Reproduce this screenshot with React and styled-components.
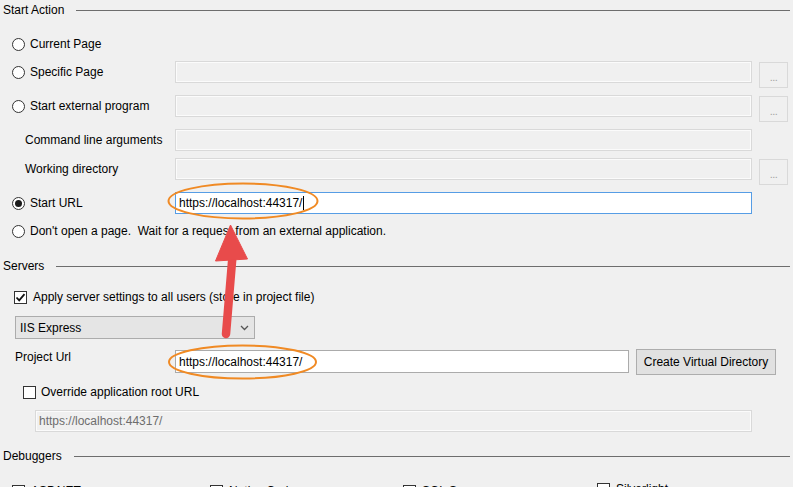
import React from "react";
import styled, { createGlobalStyle } from "styled-components";

const GlobalStyle = createGlobalStyle`
  html, body {
    margin: 0;
    padding: 0;
    background: #f0f0f0;
  }
  * {
    box-sizing: border-box;
  }
`;

const Page = styled.div`
  position: relative;
  width: 793px;
  height: 487px;
  overflow: hidden;
  padding-right: 3px;
  background: #f0f0f0;
  font-family: "Liberation Sans", Arial, sans-serif;
  font-size: 12px;
  color: #000;
`;

const Header = styled.div`
  display: flex;
  align-items: center;
  height: 20px;
  padding-left: 3px;
  margin-top: ${(p) => p.$mt || 0}px;
`;

const HeaderLine = styled.div`
  flex: 1;
  height: 1px;
  margin-left: 12px;
  background: #6d6d6d;
`;

const Row = styled.div`
  display: grid;
  grid-template-columns: ${(p) => p.$cols || "168px 577px 29px"};
  column-gap: 7px;
  align-items: start;
  height: ${(p) => p.$h}px;
  margin-top: ${(p) => p.$mt}px;
`;

const Label = styled.div`
  display: flex;
  align-items: center;
  height: ${(p) => p.$h || 22}px;
  padding-left: ${(p) => p.$pl || 0}px;
  grid-column: ${(p) => (p.$wide ? "1 / -1" : "auto")};
  white-space: pre;
`;

const Radio = styled.span`
  display: inline-flex;
  align-items: center;
  justify-content: center;
  width: 13px;
  height: 13px;
  margin-right: 5px;
  border: 1px solid #333;
  border-radius: 50%;
  background: #fff;
  &::after {
    content: "";
    display: ${(p) => (p.$checked ? "block" : "none")};
    width: 7px;
    height: 7px;
    border-radius: 50%;
    background: #1a1a1a;
  }
`;

const Box = styled.span`
  display: inline-flex;
  align-items: center;
  justify-content: center;
  width: 13px;
  height: 13px;
  margin-right: ${(p) => p.$mr || 5}px;
  border: 1px solid #333;
  background: #fff;
  svg {
    display: block;
  }
`;

const Field = styled.div`
  display: flex;
  align-items: center;
  height: ${(p) => p.$h || 22}px;
  margin-top: ${(p) => p.$mt || 0}px;
  padding-left: 3px;
  border: 1px solid ${(p) => (p.$active ? "#569de5" : p.$white ? "#ababab" : "#d9d9d9")};
  background: ${(p) => (p.$active || p.$white ? "#fff" : "#f0f0f0")};
  box-shadow: ${(p) => (p.$active || p.$white ? "none" : "inset 0 0 0 1px #fbfbfb")};
  color: ${(p) => (p.$muted ? "#6d6d6d" : "#000")};
  width: ${(p) => (p.$w ? `${p.$w}px` : "auto")};
  margin-left: ${(p) => p.$ml || 0}px;
`;

const Caret = styled.span`
  display: inline-block;
  width: 1px;
  height: 14px;
  margin-left: 1px;
  background: #000;
`;

const BrowseButton = styled.div`
  display: flex;
  align-items: center;
  justify-content: center;
  height: 26px;
  margin-top: 1px;
  padding-top: 4px;
  border: 1px solid #d9d9d9;
  background: #f0f0f0;
  color: #a3a3a3;
  font-size: 11px;
  letter-spacing: -0.5px;
`;

const Select = styled.div`
  display: flex;
  align-items: center;
  justify-content: space-between;
  width: 240px;
  height: 23px;
  margin-top: ${(p) => p.$mt}px;
  margin-left: 15px;
  padding: 0 5px 0 4px;
  border: 1px solid #acacac;
  background: #e5e5e5;
`;

const Button = styled.div`
  display: flex;
  align-items: center;
  justify-content: center;
  height: 26px;
  border: 1px solid #adadad;
  background: #e1e1e1;
`;

const CheckRow = styled.div`
  display: flex;
  align-items: center;
  height: 16px;
  margin-top: ${(p) => p.$mt}px;
  padding-left: ${(p) => p.$pl}px;
`;

const DebugRow = styled.div`
  display: grid;
  grid-template-columns: 198px 193px 194px 1fr;
  height: 16px;
  margin-top: ${(p) => p.$mt}px;
  padding-left: 12px;
`;

const DebugItem = styled.div`
  display: flex;
  align-items: center;
  height: 16px;
  margin-top: ${(p) => p.$up || 0}px;
`;

const Overlay = styled.svg`
  position: absolute;
  left: 0;
  top: 0;
  width: 793px;
  height: 487px;
  pointer-events: none;
`;

const Check = () => (
  <svg width="11" height="11" viewBox="0 0 11 11">
    <path d="M1.5 5.5 L4.2 8.3 L9.5 2.2" fill="none" stroke="#111" strokeWidth="1.8" />
  </svg>
);

const Chevron = () => (
  <svg width="9" height="6" viewBox="0 0 9 6">
    <path d="M1 1 L4.5 4.5 L8 1" fill="none" stroke="#555" strokeWidth="1.3" />
  </svg>
);

const URL = "https://localhost:44317/";

export default function App() {
  return (
    <>
      <GlobalStyle />
      <Page>
        <Header>
          Start Action
          <HeaderLine />
        </Header>

        <Row $mt={16} $h={16}>
          <Label $h={16} $pl={12} $wide>
            <Radio />
            Current Page
          </Label>
        </Row>
        <Row $mt={9} $h={27}>
          <Label $pl={12}>
            <Radio />
            Specific Page
          </Label>
          <Field />
          <BrowseButton>...</BrowseButton>
        </Row>
        <Row $mt={7} $h={26}>
          <Label $pl={12}>
            <Radio />
            Start external program
          </Label>
          <Field />
          <BrowseButton>...</BrowseButton>
        </Row>
        <Row $mt={8} $h={22}>
          <Label $pl={25}>Command line arguments</Label>
          <Field />
        </Row>
        <Row $mt={7} $h={26}>
          <Label $pl={25}>Working directory</Label>
          <Field />
          <BrowseButton>...</BrowseButton>
        </Row>
        <Row $mt={8} $h={22}>
          <Label $pl={12}>
            <Radio $checked />
            Start URL
          </Label>
          <Field $active>
            {URL}
            <Caret />
          </Field>
        </Row>
        <Row $mt={9} $h={16}>
          <Label $h={16} $pl={12} $wide>
            <Radio />
            {"Don't open a page.  Wait for a request from an external application."}
          </Label>
        </Row>

        <Header $mt={17}>
          Servers
          <HeaderLine />
        </Header>
        <CheckRow $mt={13} $pl={14}>
          <Box $mr={6}>
            <Check />
          </Box>
          Apply server settings to all users (store in project file)
        </CheckRow>
        <Select $mt={11}>
          IIS Express
          <Chevron />
        </Select>
        <Row $mt={10} $h={26} $cols="168px 454px 140px">
          <Label $h={16} $pl={15}>Project Url</Label>
          <Field $white $h={23} $mt={1}>
            {URL}
          </Field>
          <Button>Create Virtual Directory</Button>
        </Row>
        <CheckRow $mt={9} $pl={23}>
          <Box />
          Override application root URL
        </CheckRow>
        <Field $mt={10} $ml={35} $w={717} $muted>
          {URL}
        </Field>

        <Header $mt={14}>
          Debuggers
          <HeaderLine />
        </Header>
        <DebugRow $mt={17}>
          <DebugItem>
            <Box $mr={6} />
            ASP.NET
          </DebugItem>
          <DebugItem>
            <Box $mr={6} />
            Native Code
          </DebugItem>
          <DebugItem>
            <Box $mr={6} />
            SQL Server
          </DebugItem>
          <DebugItem $up={-2}>
            <Box $mr={6} />
            Silverlight
          </DebugItem>
        </DebugRow>

        <Overlay viewBox="0 0 793 487">
          <ellipse cx="243" cy="201" rx="74.5" ry="17.5" fill="none" stroke="#f08a24" strokeWidth="2" />
          <ellipse cx="242.5" cy="362" rx="73.5" ry="16.5" fill="none" stroke="#f08a24" strokeWidth="2" />
          <g fill="#e84b4b" stroke="#e84b4b">
            <line x1="232.5" y1="256" x2="226" y2="334" strokeWidth="8.5" strokeLinecap="round" />
            <polygon points="230.5,225 215.5,261 247.5,259" strokeWidth="1" strokeLinejoin="round" />
          </g>
        </Overlay>
      </Page>
    </>
  );
}
